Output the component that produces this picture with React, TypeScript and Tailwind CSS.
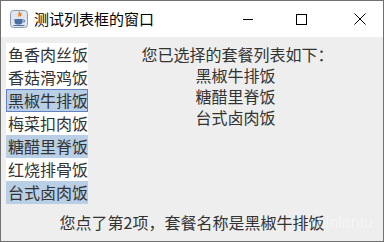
const items = ['鱼香肉丝饭', '香菇滑鸡饭', '黑椒牛排饭', '梅菜扣肉饭', '糖醋里脊饭', '红烧排骨饭', '台式卤肉饭'];
const selected = [2, 4, 6];
const font = { fontFamily: '"Noto Sans CJK SC", "Liberation Sans", sans-serif' };

function JavaIcon() {
  return (
    <svg width="18" height="18" viewBox="0 0 18 18">
      <rect x="0.5" y="0.5" width="17" height="17" rx="3" fill="#dfe6ee" stroke="#8a9bb0" />
      <path d="M9 2c1.5 1.5-1 2.5 0 4.5M10.5 3c1 1-.5 2 .3 3.2" stroke="#e07a1f" strokeWidth="1.4" fill="none" />
      <path d="M4.5 9h8v2.5a3 3 0 0 1-3 3h-2a3 3 0 0 1-3-3z" fill="#4a6fa5" />
      <path d="M12.5 10h1.2a1 1 0 0 1 0 2h-1.2" stroke="#4a6fa5" strokeWidth="1" fill="none" />
      <rect x="3.5" y="15" width="11" height="1" fill="#4a6fa5" />
    </svg>
  );
}

export default function App() {
  return (
    <div
      className="relative w-[384px] h-[242px] border border-[#707070] bg-[#eeeeee] flex flex-col overflow-hidden text-[#333333]"
      style={font}
    >
      <div className="h-[36px] bg-white flex items-center shrink-0">
        <div className="ml-[9px] mr-[6px]">
          <JavaIcon />
        </div>
        <span className="text-[15px] text-black">测试列表框的窗口</span>
        <div className="ml-auto flex items-center">
          <div className="w-[46px] h-[36px] flex items-center justify-center">
            <div className="w-[10px] h-px bg-black" />
          </div>
          <div className="w-[7px]" />
          <div className="w-[46px] h-[36px] flex items-center justify-center">
            <div className="w-[11px] h-[11px] border border-black" />
          </div>
          <div className="w-[13px]" />
          <div className="w-[46px] h-[36px] flex items-center justify-center">
            <svg width="12" height="12" viewBox="0 0 12 12">
              <path d="M0.5 0.5l11 11M11.5 0.5l-11 11" stroke="black" strokeWidth="1" />
            </svg>
          </div>
        </div>
      </div>

      <div className="flex flex-1 pt-[6px]">
        <div className="ml-[5px] w-[82px] h-[161px] bg-white flex flex-col">
          {items.map((it, i) => (
            <div
              key={it}
              className={
                'h-[23px] leading-[21px] pl-[1px] text-[16px] whitespace-nowrap ' +
                (selected.includes(i) ? 'bg-[#b8cfe5] ' : '') +
                (i === 2 ? 'border border-[#6382bf] pl-0' : 'border border-transparent')
              }
            >
              {it}
            </div>
          ))}
        </div>
        <div className="flex-1 flex flex-col items-center text-[16px] leading-[21px] pt-[1px] pl-[4px]">
          <div>您已选择的套餐列表如下：</div>
          <div className="-ml-[4px]">黑椒牛排饭</div>
          <div className="-ml-[4px]">糖醋里脊饭</div>
          <div className="-ml-[4px]">台式卤肉饭</div>
        </div>
      </div>

      <div className="h-[36px] flex items-center justify-center text-[16px] pb-[2px]">
        您点了第2项，套餐名称是黑椒牛排饭
      </div>

      <div className="absolute right-[10px] bottom-[6px] text-[16px] text-white/40 whitespace-nowrap" style={{ fontFamily: '"Liberation Sans", sans-serif' }}>
        binlantu
      </div>
    </div>
  );
}
